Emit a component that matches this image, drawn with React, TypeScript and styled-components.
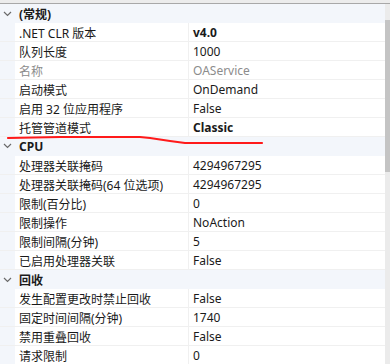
import React from "react";
import styled, { createGlobalStyle } from "styled-components";

const GlobalStyle = createGlobalStyle`
  html, body {
    margin: 0;
    padding: 0;
    background: #ffffff;
  }
  body {
    font-family: "Noto Sans", "Noto Sans CJK SC", sans-serif;
    font-size: 12px;
    color: #1a1a1a;
  }
`;

const Frame = styled.div`
  position: relative;
  width: 390px;
  height: 364px;
  overflow: hidden;
  padding-top: 3px;
  box-sizing: border-box;
  background-color: #ececec;
`;

const Panel = styled.div`
  display: flex;
  border-top: 1px solid #a8a8a8;
  height: 361px;
  background: #ffffff;
`;

const Grid = styled.div`
  flex: 1;
  display: flex;
  flex-direction: column;
`;

const Row = styled.div<{ $section?: boolean }>`
  display: grid;
  grid-template-columns: 15px 174px 1fr;
  height: 19px;
  flex-shrink: 0;
  box-sizing: border-box;
  background: ${(p) => (p.$section ? "#f3f6fb" : "#ffffff")};
  border-bottom: 1px solid ${(p) => (p.$section ? "#f3f6fb" : "#f0f0f0")};
  align-items: center;
`;

const Gutter = styled.div`
  height: 100%;
  background: #f3f6fb;
  display: flex;
  align-items: center;
  justify-content: center;
`;

const Name = styled.div<{ $dim?: boolean }>`
  height: 100%;
  display: flex;
  align-items: center;
  padding: 1px 0 0 4px;
  box-sizing: border-box;
  border-right: 1px solid #f0f0f0;
  color: ${(p) => (p.$dim ? "#8c8c8c" : "#1a1a1a")};
  white-space: nowrap;
  overflow: hidden;
`;

const SectionTitle = styled.div`
  grid-column: 2 / 4;
  padding: 1px 0 0 4px;
  font-weight: 700;
  white-space: nowrap;
`;

const Value = styled.div<{ $dim?: boolean; $bold?: boolean }>`
  padding: 1px 0 0 4px;
  color: ${(p) => (p.$dim ? "#8c8c8c" : "#1a1a1a")};
  font-weight: ${(p) => (p.$bold ? 700 : 400)};
  white-space: nowrap;
`;

const ScrollTrack = styled.div`
  width: 5px;
  background: #ebebeb;
  display: flex;
  flex-direction: column;
`;

const ScrollThumb = styled.div`
  margin-top: 16px;
  height: 152px;
  background: #c4c4c4;
`;

const Annotation = styled.svg`
  position: absolute;
  left: 0;
  top: 0;
  pointer-events: none;
`;

const Chevron = () => (
  <svg width="9" height="6" viewBox="0 0 9 6">
    <path d="M1 1 L4.5 4.5 L8 1" fill="none" stroke="#6a6a6a" strokeWidth="1.2" />
  </svg>
);

type Prop = { name: string; value: string; bold?: boolean; dim?: boolean };
type Section = { title: string; props: Prop[] };

const sections: Section[] = [
  {
    title: "(常规)",
    props: [
      { name: ".NET CLR 版本", value: "v4.0", bold: true },
      { name: "队列长度", value: "1000" },
      { name: "名称", value: "OAService", dim: true },
      { name: "启动模式", value: "OnDemand" },
      { name: "启用 32 位应用程序", value: "False" },
      { name: "托管管道模式", value: "Classic", bold: true },
    ],
  },
  {
    title: "CPU",
    props: [
      { name: "处理器关联掩码", value: "4294967295" },
      { name: "处理器关联掩码(64 位选项)", value: "4294967295" },
      { name: "限制(百分比)", value: "0" },
      { name: "限制操作", value: "NoAction" },
      { name: "限制间隔(分钟)", value: "5" },
      { name: "已启用处理器关联", value: "False" },
    ],
  },
  {
    title: "回收",
    props: [
      { name: "发生配置更改时禁止回收", value: "False" },
      { name: "固定时间间隔(分钟)", value: "1740" },
      { name: "禁用重叠回收", value: "False" },
      { name: "请求限制", value: "0" },
    ],
  },
];

export default function App() {
  return (
    <>
      <GlobalStyle />
      <Frame>
        <Panel>
          <Grid>
            {sections.map((s) => (
              <React.Fragment key={s.title}>
                <Row $section>
                  <Gutter>
                    <Chevron />
                  </Gutter>
                  <SectionTitle>{s.title}</SectionTitle>
                </Row>
                {s.props.map((p) => (
                  <Row key={p.name}>
                    <Gutter />
                    <Name $dim={p.dim}>{p.name}</Name>
                    <Value $dim={p.dim} $bold={p.bold}>
                      {p.value}
                    </Value>
                  </Row>
                ))}
              </React.Fragment>
            ))}
          </Grid>
          <ScrollTrack>
            <ScrollThumb />
          </ScrollTrack>
        </Panel>
        <Annotation width="390" height="364" viewBox="0 0 390 364">
          <path
            d="M8 138 L60 137 L140 137 L150 138 L170 141 L185 143 L262 143"
            fill="none"
            stroke="#ff1a1a"
            strokeWidth="2.2"
            strokeLinecap="round"
            strokeLinejoin="round"
          />
        </Annotation>
      </Frame>
    </>
  );
}
